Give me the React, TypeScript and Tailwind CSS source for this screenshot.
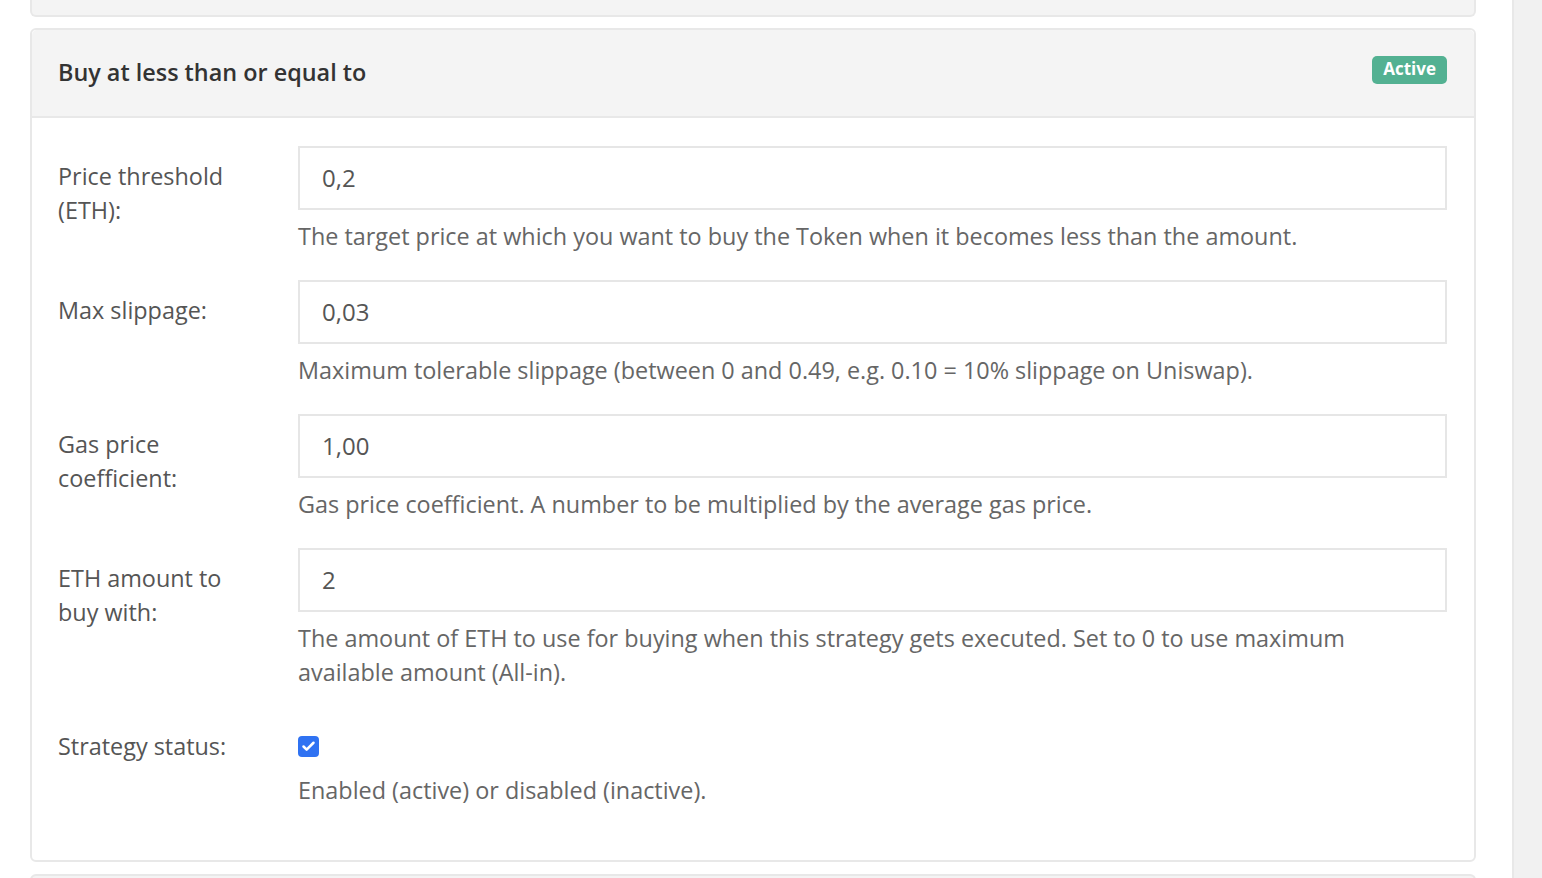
import { Check } from 'lucide-react';

type Field = {
  label: string;
  value?: string;
  help: string;
  checkbox?: boolean;
};

const fields: Field[] = [
  {
    label: 'Price threshold (ETH):',
    value: '0,2',
    help: 'The target price at which you want to buy the Token when it becomes less than the amount.',
  },
  {
    label: 'Max slippage:',
    value: '0,03',
    help: 'Maximum tolerable slippage (between 0 and 0.49, e.g. 0.10 = 10% slippage on Uniswap).',
  },
  {
    label: 'Gas price coefficient:',
    value: '1,00',
    help: 'Gas price coefficient. A number to be multiplied by the average gas price.',
  },
  {
    label: 'ETH amount to buy with:',
    value: '2',
    help: 'The amount of ETH to use for buying when this strategy gets executed. Set to 0 to use maximum available amount (All-in).',
  },
  {
    label: 'Strategy status:',
    checkbox: true,
    help: 'Enabled (active) or disabled (inactive).',
  },
];

function FormRow({ field }: { field: Field }) {
  return (
    <div className="flex">
      {/* label column */}
      <div className="w-[240px] shrink-0 pr-[50px] pt-[13px] text-[23.4px] leading-[34px] text-[#555]">
        {field.label}
      </div>
      <div className="flex-1">
        {field.checkbox ? (
          <div className="pt-[20px]">
            <span className="flex h-[21px] w-[21px] items-center justify-center rounded-[4px] bg-[#2f72f2]">
              <Check className="h-[15px] w-[15px] text-white" strokeWidth={4} />
            </span>
          </div>
        ) : (
          <div className="flex h-[64px] items-center border-2 border-[#e6e6e6] bg-white px-[22px] text-[24px] text-[#555]">
            {field.value}
          </div>
        )}
        <p className={`${field.checkbox ? 'mt-[16px]' : 'mt-[9px]'} pr-[10px] text-[23.4px] leading-[34px] text-[#666]`}>
          {field.help}
        </p>
      </div>
    </div>
  );
}

export default function App() {
  return (
    <div
      className="flex h-[878px] overflow-hidden bg-white"
      style={{ fontFamily: '"Open Sans", "Liberation Sans", sans-serif' }}
    >
      <div className="flex-1 pl-[30px] pr-[36px]">
        {/* previous card, only its bottom edge shows */}
        <div className="h-[17px] rounded-b-[6px] border-2 border-t-0 border-[#e8e8e8] bg-[#f4f4f4]" />

        <div className="mt-[11px] rounded-[6px] border-2 border-[#e8e8e8]">
          <div className="flex h-[88px] items-center justify-between rounded-t-[5px] border-b-2 border-[#e8e8e8] bg-[#f4f4f4] pl-[26px] pr-[27px]">
            <h2 className="-mt-[1px] text-[23.4px] font-semibold text-[#333]">Buy at less than or equal to</h2>
            <span className="-mt-[6px] rounded-[5px] bg-[#53b192] px-[11px] pb-[3px] pt-[1px] text-[17px] font-bold leading-[24px] text-white">
              Active
            </span>
          </div>
          <div className="flex flex-col gap-[27px] pb-[53px] pl-[26px] pr-[27px] pt-[28px]">
            {fields.map(f => (
              <FormRow key={f.label} field={f} />
            ))}
          </div>
        </div>

        {/* next card, top edge */}
        <div className="mt-[12px] h-[20px] rounded-t-[6px] border-2 border-b-0 border-[#e8e8e8] bg-[#f4f4f4]" />
      </div>

      {/* scrollbar track */}
      <div className="w-[30px] shrink-0 border-l-2 border-[#e8e8e8] bg-[#f1f1f1]" />
    </div>
  );
}
